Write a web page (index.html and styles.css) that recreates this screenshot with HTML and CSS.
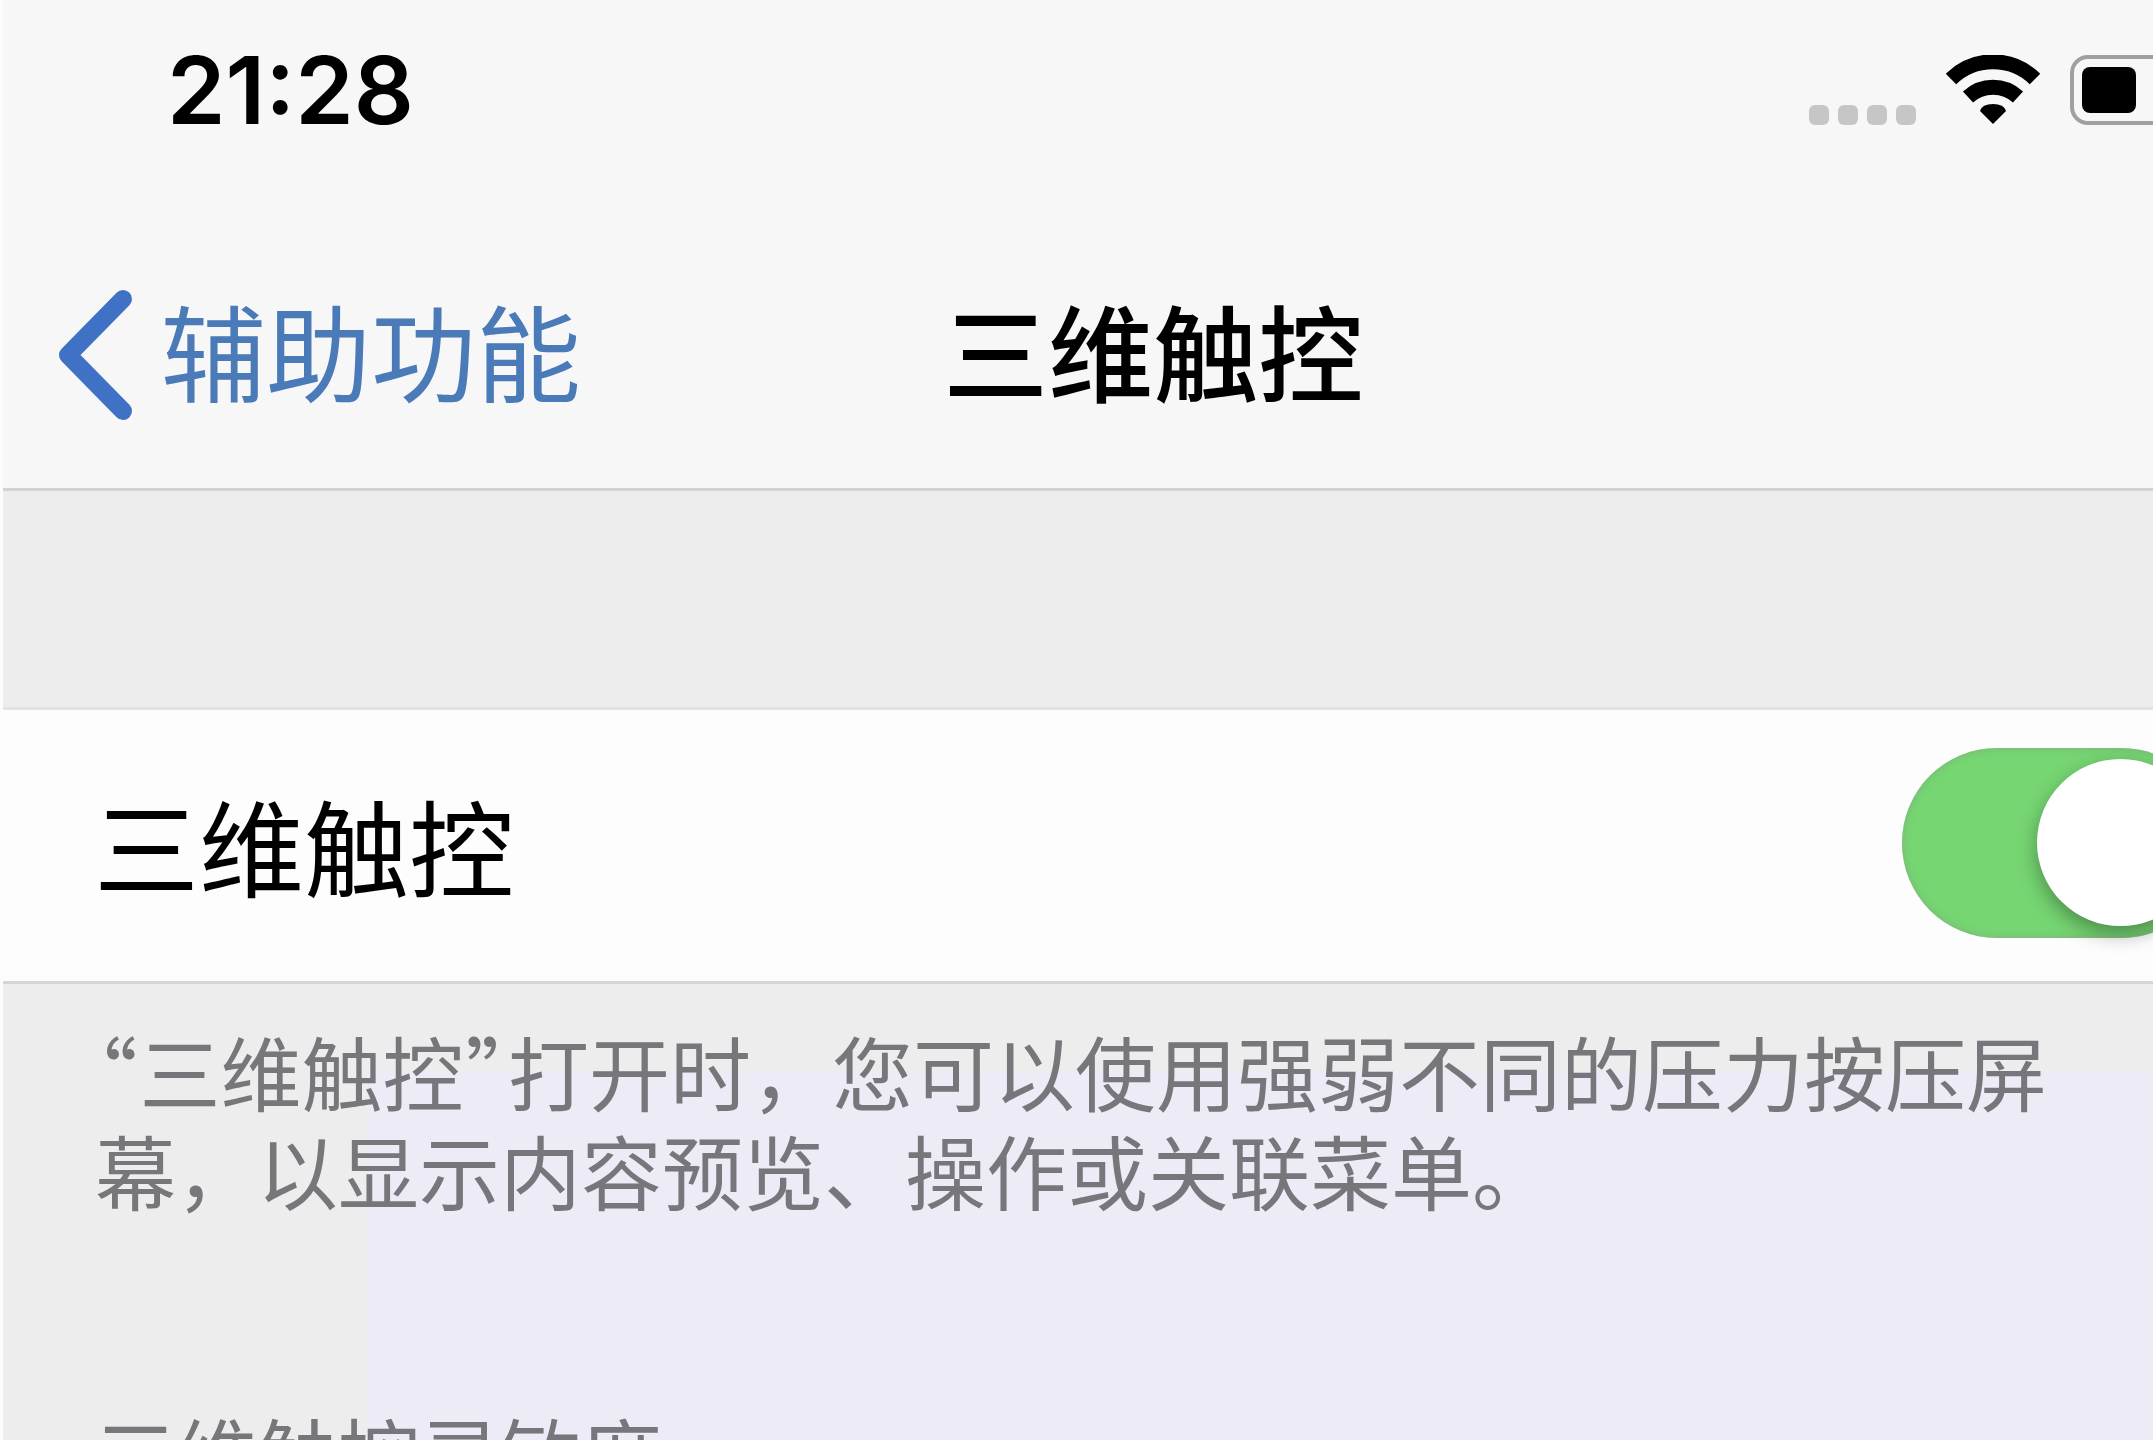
FILE: index.html
```html
<!DOCTYPE html>
<html lang="zh-CN">
<head>
<meta charset="UTF-8" />
<meta name="viewport" content="width=device-width, initial-scale=1" />
<title>三维触控</title>
<link rel="stylesheet" href="styles.css">
</head>
<body>

<div class="screen">
  <header class="top">
    <div class="status">
      <time class="clock">21:28</time>
      <div class="status-icons">
        <div class="dots"><i></i><i></i><i></i><i></i></div>
        <svg class="wifi" viewBox="0 0 94 70" aria-hidden="true">
          <path d="M5 24 A60 60 0 0 1 89 24" fill="none" stroke="#000" stroke-width="15" />
          <path d="M22 42 A37 37 0 0 1 72 42" fill="none" stroke="#000" stroke-width="15" />
          <path d="M47 69 L34 56 Q36 49 47 49 Q58 49 60 56 Z" />
        </svg>
        <div class="battery"><div class="level"></div></div>
      </div>
    </div>
    <nav class="nav">
      <a class="back" href="#">
        <svg class="chevron" viewBox="0 0 76 130" aria-hidden="true">
          <path d="M66 9 L11 65 L66 121" />
        </svg>
        <span>辅助功能</span>
      </a>
      <h1>三维触控</h1>
    </nav>
  </header>

  <main>
    <div class="row">
      <label for="touch">三维触控</label>
      <input class="switch" type="checkbox" role="switch" id="touch" checked />
    </div>
    <section class="notes">
      <p class="hint"><span class="quote">“</span>三维触控<span class="quote">”</span>打开时，您可以使用强弱不同的压力按压屏幕，以显示内容预览、操作或关联菜单。</p>
      <h2>三维触控灵敏度</h2>
    </section>
  </main>
</div>

</body>
</html>
```

FILE: styles.css
```css
* {
  box-sizing: border-box;
}
html {
  height: 100%;
  overflow: hidden;
}
body {
  margin: 0;
  height: 100%;
  overflow: hidden;
  background: #ededed;
  font-family: "Noto Sans CJK SC", sans-serif;
  color: #000;
}
/* the phone screen runs past the right edge of the window */
.screen {
  display: flex;
  flex-direction: column;
  width: 107vw;
  min-height: 100%;
  border-left: 3px solid #fcfcfc;
}
main {
  flex: 1;
  display: flex;
  flex-direction: column;
}
.top {
  background: #f7f7f7;
  border-bottom: 3px solid #d2d2d2;
}
.status {
  display: flex;
  justify-content: space-between;
  align-items: center;
  height: 180px;
  padding: 0 70px 0 164px;
}
.clock {
  font-family: Inter, sans-serif;
  font-size: 94px;
  font-weight: 600;
}
.status-icons {
  display: flex;
  align-items: flex-end;
  gap: 30px;
}
.dots {
  display: flex;
  gap: 9px;
}
.dots i {
  width: 20px;
  height: 20px;
  border-radius: 6px;
  background: #c6c6c6;
}
.wifi {
  width: 94px;
  height: 70px;
}
.battery {
  width: 164px;
  height: 70px;
  padding: 8px;
  border: 4px solid #a0a0a0;
  border-radius: 18px;
}
.level {
  width: 54px;
  height: 46px;
  border-radius: 8px;
  background: #000;
}
.nav {
  display: grid;
  grid-template-columns: 1fr auto 1fr;
  align-items: center;
  height: 308px;
  padding: 28px 54px 0;
}
.back {
  display: flex;
  align-items: center;
  gap: 28px;
  color: #4a7ab8;
  font-size: 105px;
  line-height: 130px;
  text-decoration: none;
}
.chevron {
  width: 76px;
  height: 130px;
  margin-top: 14px;
  fill: none;
  stroke: #3f72c4;
  stroke-width: 18;
  stroke-linecap: round;
  stroke-linejoin: round;
}
h1 {
  margin: 0;
  font-size: 105px;
  font-weight: 500;
  line-height: 130px;
}
.row {
  display: flex;
  justify-content: space-between;
  align-items: center;
  height: 277px;
  margin-top: 216px;
  padding: 0 88px 6px 91px;
  background: #fdfdfd;
  border-top: 3px solid #e2e2e2;
  border-bottom: 3px solid #d6d6d6;
}
.row label {
  font-size: 105px;
  line-height: 130px;
}
.switch {
  appearance: none;
  display: flex;
  align-items: center;
  justify-content: flex-end;
  width: 314px;
  height: 190px;
  margin: 0;
  padding: 12px;
  border-radius: 95px;
  background: #76d672;
  box-shadow: inset 0 0 8px #7fae7c;
}
.switch::before {
  content: "";
  width: 167px;
  height: 167px;
  border-radius: 50%;
  background: #fff;
  box-shadow: 0 8px 20px rgba(0, 0, 0, 0.35);
}
.switch:not(:checked) {
  justify-content: flex-start;
  background: #e5e5e5;
}
.notes {
  flex: 1;
  padding: 36px 160px 0 92px;
  color: #76767b;
  background: linear-gradient(#edebf6, #edebf6) 365px 88px no-repeat;
}
.hint {
  margin: 0;
  font-size: 81px;
  line-height: 99px;
}
/* half-width curly quotes */
.quote {
  padding: 0 2px;
  font-feature-settings: "halt";
}
h2 {
  margin: 184px 0 0;
  font-size: 81px;
  font-weight: 400;
  line-height: 99px;
}
```
